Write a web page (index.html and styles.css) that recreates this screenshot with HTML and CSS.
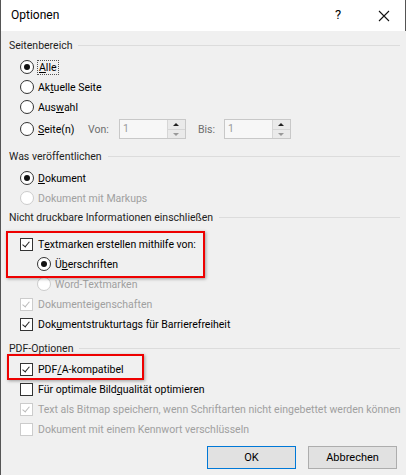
FILE: index.html
```
<!DOCTYPE html>
<html lang="de">
<head>
  <meta charset="UTF-8">
  <title>Optionen</title>
  <link rel="stylesheet" href="styles.css">
</head>
<body>

<div class="dialog">
  <div class="titlebar">
    <div class="title">Optionen</div>
    <div class="title-buttons">
      <span class="help">?</span>
      <svg class="close" width="12" height="12" viewBox="0 0 12 12"><path d="M1 1 L11 11 M11 1 L1 11" stroke="#111" stroke-width="1.1"/></svg>
    </div>
  </div>

  <div class="content">
    <!-- Seitenbereich -->
    <div class="group-title s1"><span>Seitenbereich</span></div>
    <div class="row first">
      <span class="radio checked"></span><span class="focus"><u>A</u>lle</span>
    </div>
    <div class="row"><span class="radio"></span>Ak<u>t</u>uelle Seite</div>
    <div class="row"><span class="radio"></span>Aus<u>w</u>ahl</div>
    <div class="row spin-row">
      <span class="radio"></span><span class="seite"><u>S</u>eite(n)</span>
      <span class="spin-label">Von:</span>
      <div class="spin"><span class="val">1</span><div class="arrows"><span class="up"></span><span class="down"></span></div></div>
      <span class="spin-label bis">Bis:</span>
      <div class="spin"><span class="val">1</span><div class="arrows"><span class="up"></span><span class="down"></span></div></div>
    </div>

    <!-- Was veröffentlichen -->
    <div class="group-title s2"><span>Was veröffentlichen</span></div>
    <div class="row first"><span class="radio checked"></span><u>D</u>okument</div>
    <div class="row disabled"><span class="radio"></span>Dokument mit Markups</div>

    <!-- Nicht druckbare Informationen -->
    <div class="group-title s3"><span>Nicht druckbare Informationen einschließen</span></div>
    <div class="row first-wide"><span class="check checked"></span>T<u>e</u>xtmarken erstellen mithilfe von:</div>
    <div class="row sub"><span class="radio checked"></span>Ü<u>b</u>erschriften</div>
    <div class="row sub disabled"><span class="radio"></span>Word-Textmarken</div>
    <div class="row disabled"><span class="check checked"></span>Dokumenteigenschaften</div>
    <div class="row"><span class="check checked"></span>Dok<u>u</u>mentstrukturtags für Barrierefreiheit</div>

    <!-- PDF-Optionen -->
    <div class="group-title s4"><span>PDF-Optionen</span></div>
    <div class="row first-tight"><span class="check checked"></span>PDF<u>/</u>A-kompatibel</div>
    <div class="row"><span class="check"></span>Für optimale Bild<u>q</u>ualität optimieren</div>
    <div class="row disabled"><span class="check checked"></span>Text als Bitmap speichern, wenn Schriftarten nicht eingebettet werden können</div>
    <div class="row disabled"><span class="check"></span>Dokument mit einem Kennwort verschlüsseln</div>

    <div class="buttons">
      <button class="btn default">OK</button>
      <button class="btn">Abbrechen</button>
    </div>
  </div>

  <div class="mark mark-1"></div>
  <div class="mark mark-2"></div>
</div>

</body>
</html>
```

FILE: styles.css
```
body {
  margin: 0;
  padding: 0;
  font-family: Roboto, "Noto Sans", sans-serif;
  font-size: 10.5px;
  letter-spacing: 0;
  color: #000;
  background: #f0f0f0;
}

.dialog {
  position: relative;
  width: 406px;
  height: 475px;
  box-sizing: border-box;
  border-left: 1px solid #555;
  background: #f0f0f0;
  overflow: hidden;
}

.titlebar {
  height: 31px;
  background: #fff;
  display: flex;
  align-items: center;
  justify-content: space-between;
  padding: 0 0 0 10px;
  border-right: 1px solid #555;
}

.title {
  font-size: 12px;
  margin-top: -1px;
}

.title-buttons {
  display: flex;
  align-items: center;
}

.help {
  font-size: 13px;
  width: 20px;
  text-align: center;
  margin-right: 30px;
  margin-top: -2px;
}

.close {
  margin-right: 15px;
}

.content {
  padding: 0 6px 0 8px;
}

.group-title {
  height: 20px;
  display: flex;
  align-items: center;
  gap: 6px;
  color: #1e1e1e;
}

.group-title::after {
  content: "";
  flex: 1;
  height: 1px;
  background: #dcdcdc;
}

.s1 { margin-top: 4px; }
.s2 { margin-top: 5px; }
.s3 { margin-top: -1px; }
.s4 { margin-top: 4px; }

.row {
  height: 20px;
  display: flex;
  align-items: center;
  padding-left: 11px;
  white-space: nowrap;
}

.row.first { margin-top: 2px; }
.row.first-wide { margin-top: 7px; }
.row.first-tight { margin-top: 1px; }

.row.sub {
  padding-left: 28px;
}

.row.disabled {
  color: #a0a0a0;
}

u {
  text-decoration: underline;
  text-underline-offset: 1px;
}

.radio {
  width: 12px;
  height: 12px;
  border: 1px solid #333;
  border-radius: 50%;
  background: #fff;
  margin-right: 4px;
  flex: none;
  position: relative;
}

.radio.checked::after {
  content: "";
  position: absolute;
  left: 3px;
  top: 3px;
  width: 6px;
  height: 6px;
  border-radius: 50%;
  background: #111;
}

.disabled .radio {
  border-color: #ccc;
}

.check {
  width: 11px;
  height: 11px;
  border: 1px solid #333;
  background: #fff;
  margin-right: 5px;
  flex: none;
  position: relative;
}

.check.checked::after {
  content: "";
  position: absolute;
  left: 3px;
  top: 1px;
  width: 3px;
  height: 6px;
  border-right: 1px solid #222;
  border-bottom: 1px solid #222;
  transform: rotate(40deg);
}

.disabled .check {
  border-color: #ccc;
}

.disabled .check.checked::after {
  border-color: #bbb;
}

.focus {
  outline: 1px dotted #555;
  outline-offset: 0px;
  padding: 0 1px;
}

.spin-row {
  height: 24px;
}

.seite {
  width: 50px;
}

.spin-label {
  color: #6d6d6d;
  width: 31px;
}

.spin-label.bis {
  margin-left: 12px;
  width: 26px;
}

.spin {
  width: 67px;
  height: 20px;
  box-sizing: border-box;
  border: 1px solid #c8c8c8;
  background: #f7f7f7;
  display: flex;
}

.spin .val {
  flex: 1;
  padding-left: 3px;
  color: #9a9a9a;
  line-height: 18px;
}

.arrows {
  width: 17px;
  display: flex;
  flex-direction: column;
  border-left: 1px solid #d6d6d6;
}

.arrows span {
  flex: 1;
  position: relative;
  background: #eaeaea;
}

.arrows .up {
  border-bottom: 1px solid #d6d6d6;
}

.arrows .up::after,
.arrows .down::after {
  content: "";
  position: absolute;
  left: 5px;
  top: 3px;
  border-left: 3px solid transparent;
  border-right: 3px solid transparent;
}

.arrows .up::after {
  border-bottom: 3px solid #222;
}

.arrows .down::after {
  border-top: 3px solid #999;
}

.buttons {
  display: flex;
  justify-content: flex-end;
  gap: 12px;
  margin-top: 7px;
  padding-right: 3px;
}

.btn {
  width: 89px;
  height: 23px;
  font-family: inherit;
  font-size: 11px;
  background: #e1e1e1;
  border: 1px solid #adadad;
  color: #000;
  padding: 0;
}

.btn.default {
  border-color: #0078d7;
}

.mark {
  position: absolute;
  border: 2px solid #ee0000;
  box-shadow: 1px 1px 3px rgba(0,0,0,0.35);
}

.mark-1 {
  left: 5px;
  top: 231px;
  width: 195px;
  height: 43px;
}

.mark-2 {
  left: 6px;
  top: 354px;
  width: 133px;
  height: 22px;
}
```
